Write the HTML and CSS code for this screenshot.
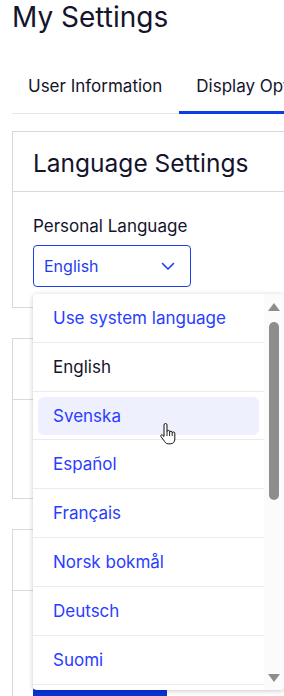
FILE: index.html
```html
<!DOCTYPE html>
<html lang="en">
<head>
  <meta charset="UTF-8">
  <meta name="viewport" content="width=device-width, initial-scale=1.0">
  <title>My Settings</title>
  <link rel="stylesheet" href="styles.css">
</head>
<body>
  <div class="page">
    <h1 class="title">My Settings</h1>

    <nav class="tabs">
      <div class="tab">User Information</div>
      <div class="tab active">Display Options</div>
    </nav>

    <section class="card">
      <h2 class="card-head">Language Settings</h2>
      <div class="card-body">
        <div class="field-label">Personal Language</div>
        <div class="select">
          <span>English</span>
          <svg class="chevron" width="16" height="16" viewBox="0 0 16 16">
            <path d="M2.5 5.5 L8 11 L13.5 5.5" fill="none" stroke="#1f3df0" stroke-width="1.6" stroke-linecap="round" stroke-linejoin="round"/>
          </svg>
        </div>
      </div>
    </section>

    <section class="card">
      <div class="card-head blank"></div>
      <div class="card-body tall"></div>
    </section>

    <section class="card">
      <div class="card-head blank"></div>
      <div class="card-body">
        <div class="save-btn"></div>
      </div>
    </section>

    <!-- open language menu -->
    <div class="menu">
      <ul class="options">
        <li class="option">Use system language</li>
        <li class="option selected">English</li>
        <li class="option hover"><span>Svenska</span></li>
        <li class="option">Español</li>
        <li class="option">Français</li>
        <li class="option">Norsk bokmål</li>
        <li class="option">Deutsch</li>
        <li class="option">Suomi</li>
      </ul>
      <div class="scrollbar">
        <div class="arrow up"></div>
        <div class="thumb"></div>
        <div class="arrow down"></div>
      </div>
    </div>

    <svg class="cursor" width="18" height="24" viewBox="0 0 18 23">
      <path d="M5 2.5 a1.5 1.5 0 0 1 3 0 V9.2 a1.3 1.3 0 0 1 2.6 0 v0.8 a1.3 1.3 0 0 1 2.6 0 v0.8 a1.3 1.3 0 0 1 2.6 0 V16.5 c0 2.8 -1.6 4.8 -4.2 4.8 H9.2 c-1.5 0 -2.6 -0.8 -3.4 -2.1 L1.9 14 c-0.7 -1 0.6 -2.2 1.6 -1.4 L5 14 Z" fill="#fff" stroke="#111" stroke-width="1" stroke-linejoin="round"/>
      <path d="M8 9.5 v4 M10.6 10 v3.6 M13.2 10.8 v2.8" fill="none" stroke="#111" stroke-width="0.9"/>
    </svg>
  </div>
</body>
</html>
```

FILE: styles.css
```css
html, body {
  margin: 0;
  overflow: hidden;
}

body {
  font-family: Inter, "Noto Sans", sans-serif;
  color: #14142b;
  background: #fff;
}

.page {
  position: relative;
  width: 272px;
  height: 696px;
  padding-left: 12px;
  overflow: hidden;
}

.title {
  margin: 0;
  padding-top: 1px;
  font-size: 28px;
  line-height: 32px;
  font-weight: 400;
  white-space: nowrap;
}

.tabs {
  display: flex;
  margin-top: 29px;
  width: 440px;
}

.tab {
  padding: 12px 17px 12px 16px;
  font-size: 17px;
  line-height: 24px;
  border-bottom: 1px solid #e6e6e6;
  white-space: nowrap;
}

.tab.active {
  padding: 12px 16px 13px 17px;
  border-bottom: 3px solid #0a3de6;
}

.card {
  width: 420px;
  border: 1px solid #d9d9d9;
  margin-top: 17px;
  margin-bottom: 30px;
}

.card + .card {
  margin-top: 0;
}

.card-head {
  margin: 0;
  padding: 15px 20px 12px;
  font-size: 24.5px;
  line-height: 32px;
  font-weight: 400;
  border-bottom: 1px solid #d9d9d9;
}

.card-head.blank {
  height: 32px;
  padding: 14px 20px 14px;
}

.card-body {
  padding: 22px 20px 20px;
}

.card-body.tall {
  height: 56px;
}

.field-label {
  font-size: 17px;
  line-height: 24px;
}

.select {
  display: flex;
  align-items: center;
  justify-content: space-between;
  box-sizing: border-box;
  width: 158px;
  height: 42px;
  margin-top: 7px;
  padding: 0 14px 0 10px;
  border: 1px solid #1f3df0;
  border-radius: 4px;
  color: #1f3df0;
  font-size: 16px;
}

.save-btn {
  width: 134px;
  height: 40px;
  margin-top: 74px;
  background: #0a33d6;
  border-radius: 4px;
}

.menu {
  position: absolute;
  left: 33px;
  top: 294px;
  width: 251px;
  height: 396px;
  display: flex;
  background: #fff;
  border-radius: 4px;
  box-shadow: 0 1px 5px rgba(0, 0, 0, 0.22);
  overflow: hidden;
}

.options {
  list-style: none;
  margin: 0;
  padding: 0;
  flex: 1;
}

.option {
  padding: 12px 20px;
  font-size: 17px;
  line-height: 24px;
  color: #2a3dff;
  border-bottom: 1px solid #ebebeb;
  white-space: nowrap;
}

.option.selected {
  color: #14142b;
}

.option.hover {
  padding: 5px 5px 4px;
}

.option.hover span {
  display: block;
  padding: 7px 15px;
  background: #eef0fd;
  border-radius: 6px;
}

.scrollbar {
  width: 20px;
  display: flex;
  flex-direction: column;
  align-items: center;
  background: #fbfbfb;
  padding: 9px 0 8px;
}

.arrow {
  width: 0;
  height: 0;
  border-left: 6px solid transparent;
  border-right: 6px solid transparent;
}

.arrow.up {
  border-bottom: 8px solid #8d8d8d;
}

.arrow.down {
  margin-top: auto;
  border-top: 8px solid #8d8d8d;
}

.thumb {
  width: 10px;
  height: 178px;
  margin-top: 11px;
  background: #8d8d8d;
  border-radius: 5px;
}

.cursor {
  position: absolute;
  left: 159px;
  top: 422px;
}
```
